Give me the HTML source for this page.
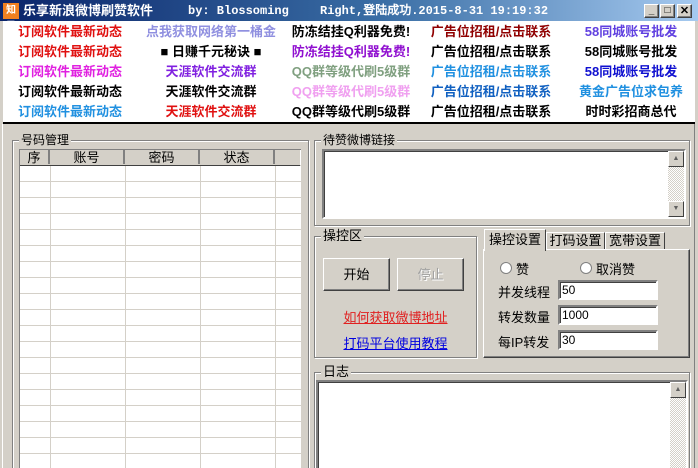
<!DOCTYPE html>
<html style="overflow:hidden;width:698px;height:468px"><head><meta charset="utf-8"><style>
*{margin:0;padding:0;box-sizing:border-box}
body{width:698px;height:468px;background:#d4d0c8;font-family:"Liberation Sans","SimSun","Noto Sans CJK SC",sans-serif;font-size:12px;position:relative;overflow:hidden}
.abs{position:absolute}
#title{left:0;top:0;width:698px;height:21px;background:linear-gradient(to right,#0a246a,#3a6ea5 55%,#a6caf0);color:#fff;font-weight:bold}
#ads{left:3px;top:21px;width:692px;height:103px;background:#fff;border-bottom:2px solid #000}
.ad{position:absolute;width:140px;text-align:center;font-weight:bold;font-size:13px;line-height:20px;white-space:nowrap;font-family:"Liberation Sans","Noto Sans CJK SC",sans-serif}
.grp{position:absolute;border:1px solid #808080;box-shadow:1px 1px 0 #fff inset,1px 1px 0 #fff}
.gl{position:absolute;background:#d4d0c8;padding:0 2px;font-size:12px;line-height:14px;top:-8px;left:6px}
.sunk{position:absolute;background:#fff;border:2px solid;border-color:#808080 #fff #fff #808080;box-shadow:inset 1px 1px 0 #404040}
.btn{position:absolute;background:#d4d0c8;border:1px solid;border-color:#fff #404040 #404040 #fff;box-shadow:inset -1px -1px 0 #808080;text-align:center;font-size:13px}
.inp{position:absolute;background:#fff;border:2px solid;border-color:#808080 #fff #fff #808080;box-shadow:inset 1px 1px 0 #404040;font-size:12px;line-height:16px;padding-left:2px}
.sb{position:absolute;width:16px;background:repeating-conic-gradient(#d4d0c8 0 25%,#fff 0 50%) 0 0/2px 2px}
.sbb{position:absolute;left:0;width:16px;height:16px;background:#d4d0c8;border:1px solid;border-color:#fff #404040 #404040 #fff;font-size:7px;text-align:center;line-height:14px;color:#606060}
</style></head><body>
<div id="title" class="abs">
 <div class="abs" style="left:3px;top:3px;width:16px;height:16px;background:#f08020;color:#fff;font-size:10px;line-height:16px;text-align:center">知己</div>
 <div class="abs" style="left:23px;top:3px;font-size:13px;line-height:15px">乐享新浪微博刷赞软件</div>
 <div class="abs" style="left:188px;top:4px;font-family:'Liberation Mono',monospace;font-size:12px;line-height:14px">by: Blossoming</div>
 <div class="abs" style="left:320px;top:4px;font-family:'Liberation Mono',monospace;font-size:12px;line-height:14px">Right,登陆成功.2015-8-31 19:19:32</div>
 <div class="btn" style="left:644px;top:4px;width:15px;height:14px;font-size:10px;line-height:12px;color:#000;font-weight:bold">_</div>
 <div class="btn" style="left:660px;top:4px;width:15px;height:14px;font-size:10px;line-height:12px;color:#000">□</div>
 <div class="btn" style="left:677px;top:4px;width:15px;height:14px;font-size:11px;line-height:12px;color:#000;font-weight:bold">✕</div>
</div>
<div id="ads" class="abs">
 <div class="ad" style="left:-3px;top:1px;color:#e01010">订阅软件最新动态</div>
 <div class="ad" style="left:-3px;top:21px;color:#e01010">订阅软件最新动态</div>
 <div class="ad" style="left:-3px;top:41px;color:#e020e0">订阅软件最新动态</div>
 <div class="ad" style="left:-3px;top:61px;color:#000">订阅软件最新动态</div>
 <div class="ad" style="left:-3px;top:81px;color:#2090e0">订阅软件最新动态</div>
 <div class="ad" style="left:138px;top:1px;color:#9090e0">点我获取网络第一桶金</div>
 <div class="ad" style="left:138px;top:21px;color:#000">■ 日赚千元秘诀 ■</div>
 <div class="ad" style="left:138px;top:41px;color:#8020e0">天涯软件交流群</div>
 <div class="ad" style="left:138px;top:61px;color:#000">天涯软件交流群</div>
 <div class="ad" style="left:138px;top:81px;color:#e01010">天涯软件交流群</div>
 <div class="ad" style="left:278px;top:1px;color:#000">防冻结挂Q利器免费!</div>
 <div class="ad" style="left:278px;top:21px;color:#9010d0">防冻结挂Q利器免费!</div>
 <div class="ad" style="left:278px;top:41px;color:#80a080">QQ群等级代刷5级群</div>
 <div class="ad" style="left:278px;top:61px;color:#f0a0f0">QQ群等级代刷5级群</div>
 <div class="ad" style="left:278px;top:81px;color:#000">QQ群等级代刷5级群</div>
 <div class="ad" style="left:418px;top:1px;color:#900000">广告位招租/点击联系</div>
 <div class="ad" style="left:418px;top:21px;color:#000">广告位招租/点击联系</div>
 <div class="ad" style="left:418px;top:41px;color:#2090e0">广告位招租/点击联系</div>
 <div class="ad" style="left:418px;top:61px;color:#1060c0">广告位招租/点击联系</div>
 <div class="ad" style="left:418px;top:81px;color:#000">广告位招租/点击联系</div>
 <div class="ad" style="left:558px;top:1px;color:#6040e0">58同城账号批发</div>
 <div class="ad" style="left:558px;top:21px;color:#000">58同城账号批发</div>
 <div class="ad" style="left:558px;top:41px;color:#1010d0">58同城账号批发</div>
 <div class="ad" style="left:558px;top:61px;color:#2090e0">黄金广告位求包养</div>
 <div class="ad" style="left:558px;top:81px;color:#000">时时彩招商总代</div>
</div>
<div class="abs" style="left:0;top:124px;width:3px;height:344px;background:#d4d0c8;border-right:1px solid #fff"></div>
<div class="abs" style="left:694px;top:124px;width:1px;height:344px;background:#808080"></div>

<!-- 号码管理 -->
<div class="grp" style="left:12px;top:140px;width:297px;height:328px;border-bottom:none"><span class="gl">号码管理</span></div>
<div class="abs" style="left:19px;top:149px;width:282px;height:319px;background:#fff;border-left:1px solid #808080;border-top:1px solid #808080;
background-image:linear-gradient(#d4d0c8 1px,transparent 1px);background-size:100% 16px;background-position:0 15px"></div>
<div class="abs" style="left:20px;top:150px;height:16px;width:280px;background:#d4d0c8;border-bottom:1px solid #404040"></div>
<div class="abs" style="left:20px;top:150px;width:280px;height:16px;font-size:13px;line-height:15px">
 <div class="abs" style="left:0;width:30px;text-align:center;border-right:2px solid #808080;height:14px">序</div>
 <div class="abs" style="left:30px;width:75px;text-align:center;border-right:2px solid #808080;height:14px">账号</div>
 <div class="abs" style="left:105px;width:75px;text-align:center;border-right:2px solid #808080;height:14px">密码</div>
 <div class="abs" style="left:180px;width:75px;text-align:center;border-right:2px solid #808080;height:14px">状态</div>
</div>
<div class="abs" style="left:50px;top:166px;width:1px;height:302px;background:#d4d0c8"></div>
<div class="abs" style="left:125px;top:166px;width:1px;height:302px;background:#d4d0c8"></div>
<div class="abs" style="left:200px;top:166px;width:1px;height:302px;background:#d4d0c8"></div>
<div class="abs" style="left:275px;top:166px;width:1px;height:302px;background:#d4d0c8"></div>

<!-- 待赞微博链接 -->
<div class="grp" style="left:314px;top:140px;width:376px;height:86px"><span class="gl">待赞微博链接</span></div>
<div class="sunk" style="left:322px;top:149px;width:364px;height:70px"></div>
<div class="sb" style="left:668px;top:151px;height:66px"><div class="sbb" style="top:0">▲</div><div class="sbb" style="top:50px">▼</div></div>

<!-- 操控区 -->
<div class="grp" style="left:314px;top:236px;width:163px;height:122px"><span class="gl" style="font-size:13px">操控区</span></div>
<div class="btn" style="left:323px;top:258px;width:67px;height:33px;line-height:31px">开始</div>
<div class="btn" style="left:397px;top:258px;width:67px;height:33px;line-height:31px;color:#a0a0a0;text-shadow:1px 1px 0 #fff">停止</div>
<div class="abs" style="left:314px;top:307px;width:163px;text-align:center;color:#e02020;text-decoration:underline;font-size:13px">如何获取微博地址</div>
<div class="abs" style="left:314px;top:333px;width:163px;text-align:center;color:#0000e0;text-decoration:underline;font-size:13px">打码平台使用教程</div>

<!-- tabs -->
<div class="abs" style="left:483px;top:249px;width:207px;height:109px;border:1px solid;border-color:#fff #404040 #404040 #fff;box-shadow:inset -1px -1px 0 #808080"></div>
<div class="abs" style="left:484px;top:229px;width:62px;height:22px;background:#d4d0c8;border:1px solid;border-color:#fff #404040 transparent #fff;border-bottom:none;text-align:center;font-size:13px;line-height:20px">操控设置</div>
<div class="abs" style="left:546px;top:232px;width:59px;height:17px;border:1px solid;border-color:#fff #404040 transparent #fff;border-bottom:none;text-align:center;font-size:13px;line-height:16px">打码设置</div>
<div class="abs" style="left:605px;top:232px;width:60px;height:17px;border:1px solid;border-color:#fff #404040 transparent #fff;border-bottom:none;text-align:center;font-size:13px;line-height:16px">宽带设置</div>
<div class="abs" style="left:500px;top:262px;width:12px;height:12px;border-radius:50%;background:#fff;border:1px solid #808080"></div>
<div class="abs" style="left:516px;top:259px;font-size:13px">赞</div>
<div class="abs" style="left:580px;top:262px;width:12px;height:12px;border-radius:50%;background:#fff;border:1px solid #808080"></div>
<div class="abs" style="left:596px;top:259px;font-size:13px">取消赞</div>
<div class="abs" style="left:498px;top:282px;font-size:13px">并发线程</div>
<div class="abs" style="left:498px;top:307px;font-size:13px">转发数量</div>
<div class="abs" style="left:498px;top:332px;font-size:13px">每IP转发</div>
<div class="inp" style="left:558px;top:280px;width:100px;height:20px">50</div>
<div class="inp" style="left:558px;top:305px;width:100px;height:20px">1000</div>
<div class="inp" style="left:558px;top:330px;width:100px;height:20px">30</div>

<!-- 日志 -->
<div class="grp" style="left:314px;top:372px;width:376px;height:96px;border-bottom:none"><span class="gl" style="font-size:13px">日志</span></div>
<div class="sunk" style="left:316px;top:380px;width:372px;height:88px;border-bottom:none"></div>
<div class="sb" style="left:670px;top:382px;height:86px"><div class="sbb" style="top:0">▲</div></div>
</body></html>
